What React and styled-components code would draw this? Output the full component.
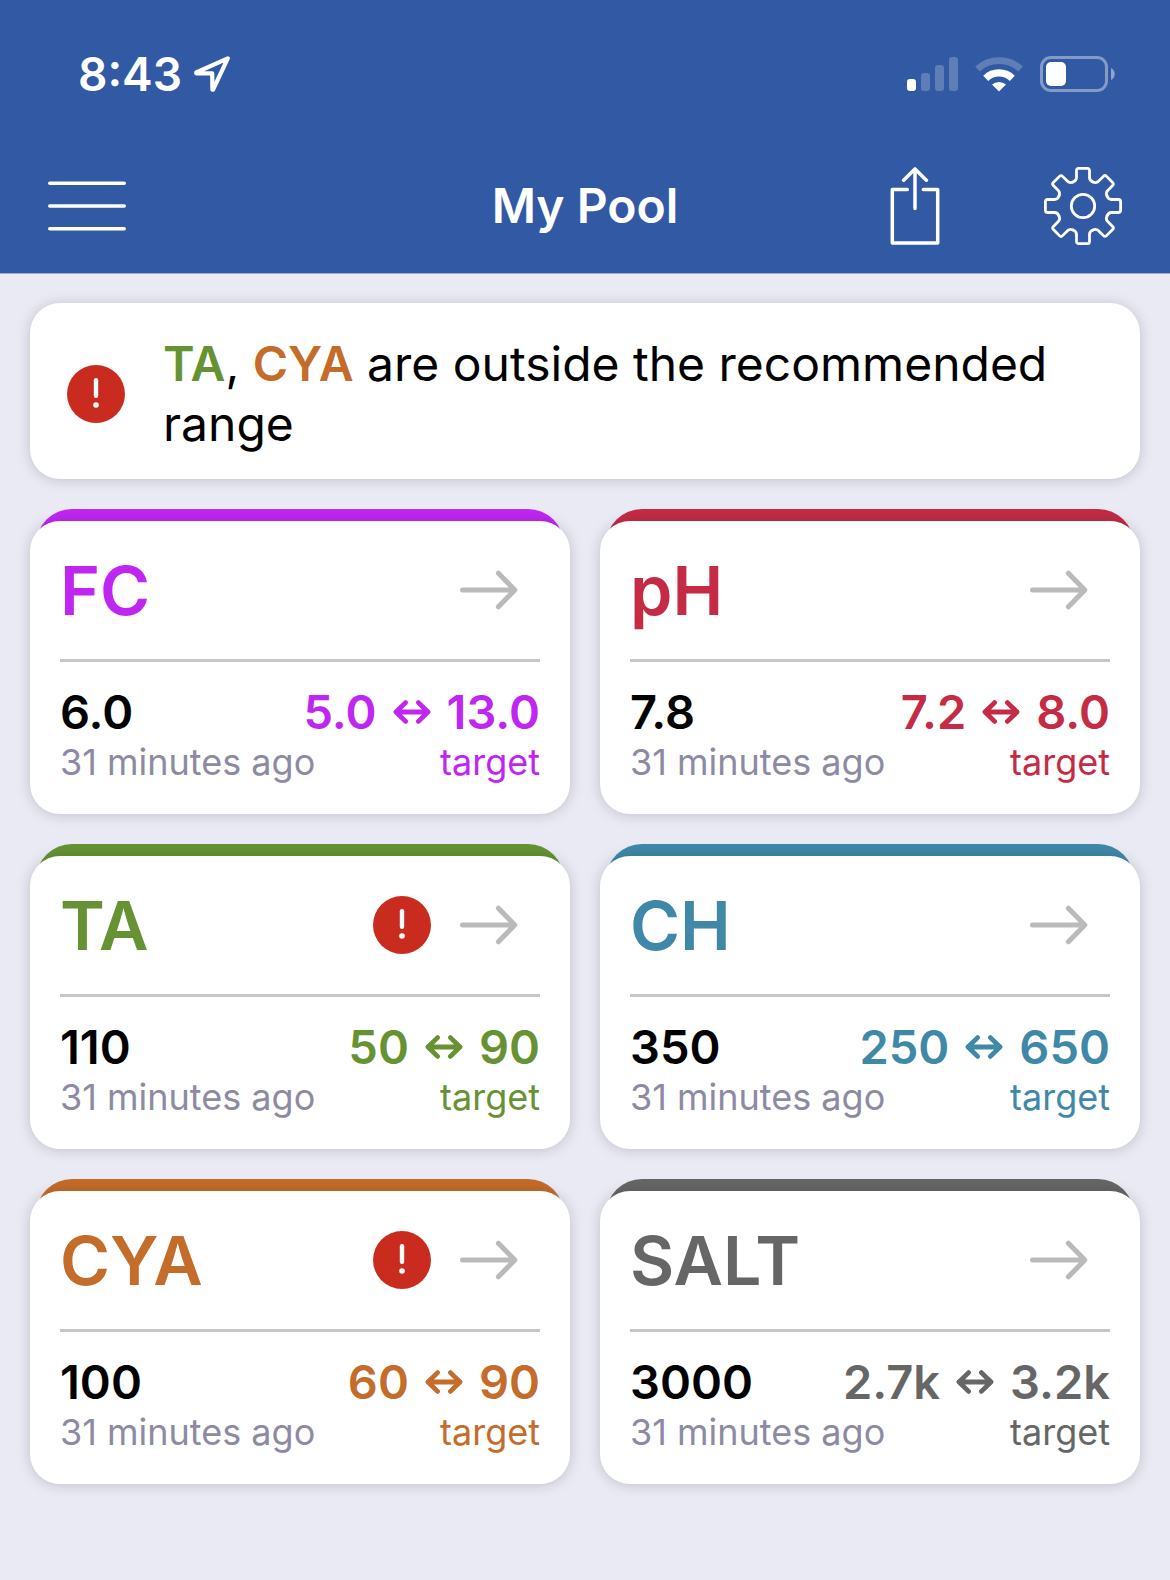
import * as React from 'react';
import styled, { createGlobalStyle } from 'styled-components';

const GlobalStyle = createGlobalStyle`
  * {
    box-sizing: border-box;
  }

  body {
    margin: 0;
    min-height: 100vh;
    background: #e9eaf4;
    color: #000;
    font-family: Inter, 'Liberation Sans', sans-serif;
  }
`;

const TopDiv = styled.header`
  background: #3259a3;
  border-bottom: 1px solid #a3abc6;
  color: #fff;
  padding-bottom: 9px;
`;

const StatusBarDiv = styled.div`
  display: flex;
  align-items: center;
  justify-content: space-between;
  height: 148px;
  padding: 0 54px 0 78px;
`;

const StatusGroup = styled.div`
  display: flex;
  align-items: center;
  gap: ${(p) => p.$gap}px;
`;

const Clock = styled.time`
  font-size: 46px;
  font-weight: 600;
  line-height: 60px;
`;

const NavBar = styled.nav`
  display: grid;
  grid-template-columns: 1fr auto 1fr;
  align-items: center;
  height: 116px;
  padding: 0 48px;
`;

const NavTitle = styled.h1`
  margin: 0;
  font-size: 48px;
  font-weight: 600;
  line-height: 60px;
`;

const NavActions = styled.div`
  display: flex;
  justify-content: flex-end;
  gap: 90px;
`;

const IconButton = styled.button`
  display: block;
  justify-self: start;
  padding: 0;
  border: 0;
  background: none;
  color: inherit;
  cursor: pointer;

  svg {
    display: block;
  }
`;

const Main = styled.main`
  display: grid;
  gap: 30px;
  padding: 29px 30px 30px;
`;

const Notice = styled.section`
  display: flex;
  align-items: center;
  gap: 38px;
  padding: 31px 37px 25px;
  border-radius: 30px;
  background: #fff;
  box-shadow: 0 1px 14px rgba(0, 0, 0, 0.18);

  svg {
    flex: none;
  }

  p {
    margin: 0;
    font-size: 48px;
    line-height: 60px;
  }
`;

const Tag = styled.strong`
  color: ${(p) => p.$color};
  font-weight: 600;
`;

const CardGrid = styled.div`
  display: grid;
  grid-template-columns: repeat(2, minmax(0, 1fr));
  gap: 30px;
`;

// 顶部 12px 的彩色边，比白色卡片两侧各窄 6px
const Card = styled.article`
  margin: 0 6px;
  padding-top: 12px;
  border-radius: 36px;
  background: ${(p) => p.$color};
  color: ${(p) => p.$color};
`;

const CardBody = styled.div`
  margin: 0 -6px;
  padding: 0 30px 27px;
  border-radius: 30px;
  background: #fff;
  box-shadow: 0 1px 14px rgba(0, 0, 0, 0.18);
`;

const CardHead = styled.div`
  display: flex;
  align-items: center;
  gap: 29px;
  height: 141px;
  padding-right: 22px;
  border-bottom: 3px solid #c6c6c8;

  h2 {
    flex: 1;
    margin: 0;
    font-size: 68px;
    font-weight: 600;
    line-height: 84px;
  }
`;

const CardStats = styled.div`
  padding-top: 25px;
  white-space: nowrap;
`;

const Row = styled.div`
  display: flex;
  justify-content: space-between;
  line-height: 50px;
`;

const ValueRow = styled(Row)`
  font-size: 47px;
  font-weight: 600;
`;

const CaptionRow = styled(Row)`
  font-size: 36px;
`;

const Reading = styled.span`
  color: #000;
`;

const TimeAgo = styled.span`
  color: #8d8aa3;
`;

const Range = styled.div`
  display: flex;
  align-items: center;
  gap: 16px;
`;

function LocationIcon() {
  return (
    <svg width="36" height="36" viewBox="0 0 36 36" fill="none" stroke="#fff" strokeWidth="4.2" strokeLinejoin="round">
      <path d="M33.8 2.3 2.2 16.5v.8H18.2l.2 16.3h.7z" />
    </svg>
  );
}

function SignalIcon() {
  return (
    <svg width="51" height="34" viewBox="0 0 51 34" fill="#fff">
      <rect x="0" y="22" width="9" height="12" rx="3" />
      <g opacity="0.22">
        <rect x="14" y="16" width="9" height="18" rx="3" />
        <rect x="28" y="8" width="9" height="26" rx="3" />
        <rect x="42" y="0" width="9" height="34" rx="3" />
      </g>
    </svg>
  );
}

function WifiIcon() {
  return (
    <svg width="48" height="36" viewBox="0 0 48 36" fill="none" stroke="#fff">
      <path d="M2.4 13a32.2 32.2 0 0 1 43.2 0" strokeWidth="6.8" opacity="0.22" />
      <path d="M10.7 22.3a19.2 19.2 0 0 1 26.6 0" strokeWidth="7.2" />
      <path d="M17 28.6a10.8 10.8 0 0 1 14 0L24 35.6z" fill="#fff" stroke="none" />
    </svg>
  );
}

function BatteryIcon() {
  return (
    <svg width="76" height="36" viewBox="0 0 76 36">
      <rect x="1.5" y="1.5" width="65" height="33" rx="9.5" fill="none" stroke="#fff" strokeWidth="3" opacity="0.4" />
      <rect x="6" y="6" width="20" height="24" rx="5" fill="#fff" />
      <path d="M71 12c5 2 5 10 0 12z" fill="#fff" opacity="0.45" />
    </svg>
  );
}

function MenuIcon() {
  return (
    <svg width="78" height="78" viewBox="0 0 78 78" stroke="currentColor" strokeWidth="3.6" strokeLinecap="round">
      <path d="M1.8 16.3h74.4M1.8 39h74.4M1.8 61.7h74.4" />
    </svg>
  );
}

function ShareIcon() {
  return (
    <svg
      width="78"
      height="78"
      viewBox="0 0 78 78"
      fill="none"
      stroke="currentColor"
      strokeWidth="3.5"
      strokeLinecap="round"
      strokeLinejoin="round"
    >
      <path d="M31.3 22.4H16.3V76h45.4V22.4H47.3" />
      <path d="M39 2v39.5M27.6 13.2 39 1.9l11.4 11.3" />
    </svg>
  );
}

// one tooth, repeated every 45 degrees round the hub
const TOOTH =
  'M-9.95-24C-8-24.8-6.5-25.4-6.5-28.4V-35.4Q-6.5-37.6-4.3-37.6H4.3Q6.5-37.6 6.5-35.4V-28.4C6.5-25.4 8-24.8 9.95-24';

function GearIcon() {
  return (
    <svg
      width="78"
      height="78"
      viewBox="-39 -39 78 78"
      fill="none"
      stroke="currentColor"
      strokeWidth="2.8"
      strokeLinecap="round"
    >
      {[0, 45, 90, 135, 180, 225, 270, 315].map((angle) => (
        <path key={angle} d={TOOTH} transform={`rotate(${angle})`} />
      ))}
      <circle r="11.7" />
    </svg>
  );
}

function AlertIcon() {
  return (
    <svg width="58" height="58" viewBox="0 0 58 58" role="img" aria-label="Out of range">
      <circle cx="29" cy="29" r="29" fill="#c92b1f" />
      <path d="M29 15.3v15.4" stroke="#fff" strokeWidth="4.4" strokeLinecap="round" />
      <circle cx="29" cy="40" r="2.8" fill="#fff" />
    </svg>
  );
}

function ArrowIcon() {
  return (
    <svg
      width="58"
      height="58"
      viewBox="0 0 58 58"
      fill="none"
      stroke="#bababa"
      strokeWidth="5"
      strokeLinecap="round"
      strokeLinejoin="round"
    >
      <path d="M2.5 29h52M38.4 12.2 54.8 29 38.4 45.8" />
    </svg>
  );
}

function RangeIcon() {
  return (
    <svg
      width="38"
      height="24"
      viewBox="0 0 38 24"
      fill="none"
      stroke="currentColor"
      strokeWidth="4.8"
      strokeLinecap="round"
      strokeLinejoin="round"
    >
      <path d="M3 12h32M12.6 2.6 3 12l9.6 9.4M25.4 2.6 35 12l-9.6 9.4" />
    </svg>
  );
}

const readings = [
  { name: 'FC', color: '#c026f2', value: '6.0', low: '5.0', high: '13.0' },
  { name: 'pH', color: '#c52b45', value: '7.8', low: '7.2', high: '8.0' },
  { name: 'TA', color: '#669234', value: '110', low: '50', high: '90', alert: true },
  { name: 'CH', color: '#3f88a8', value: '350', low: '250', high: '650' },
  { name: 'CYA', color: '#c46c2a', value: '100', low: '60', high: '90', alert: true },
  { name: 'SALT', color: '#666666', value: '3000', low: '2.7k', high: '3.2k' },
];

function ReadingCard({ name, color, value, low, high, alert }) {
  return (
    <Card $color={color}>
      <CardBody>
        <CardHead>
          <h2>{name}</h2>
          {alert && <AlertIcon />}
          <IconButton type="button" aria-label={`Open ${name}`}>
            <ArrowIcon />
          </IconButton>
        </CardHead>
        <CardStats>
          <ValueRow>
            <Reading>{value}</Reading>
            <Range>
              <span>{low}</span>
              <RangeIcon />
              <span>{high}</span>
            </Range>
          </ValueRow>
          <CaptionRow>
            <TimeAgo>31 minutes ago</TimeAgo>
            <span>target</span>
          </CaptionRow>
        </CardStats>
      </CardBody>
    </Card>
  );
}

export default function App() {
  const outside = readings.filter((r) => r.alert);

  return (
    <>
      <GlobalStyle />
      <TopDiv>
        <StatusBarDiv>
          <StatusGroup $gap={12}>
            <Clock>8:43</Clock>
            <LocationIcon />
          </StatusGroup>
          <StatusGroup $gap={17}>
            <SignalIcon />
            <WifiIcon />
            <BatteryIcon />
          </StatusGroup>
        </StatusBarDiv>
        <NavBar>
          <IconButton type="button" aria-label="Menu">
            <MenuIcon />
          </IconButton>
          <NavTitle>My Pool</NavTitle>
          <NavActions>
            <IconButton type="button" aria-label="Share">
              <ShareIcon />
            </IconButton>
            <IconButton type="button" aria-label="Settings">
              <GearIcon />
            </IconButton>
          </NavActions>
        </NavBar>
      </TopDiv>

      <Main>
        <Notice>
          <AlertIcon />
          <p>
            {outside.map((r, i) => (
              <React.Fragment key={r.name}>
                {i > 0 && ', '}
                <Tag $color={r.color}>{r.name}</Tag>
              </React.Fragment>
            ))}{' '}
            are outside the recommended range
          </p>
        </Notice>
        <CardGrid>
          {readings.map((r) => (
            <ReadingCard key={r.name} {...r} />
          ))}
        </CardGrid>
      </Main>
    </>
  );
}
